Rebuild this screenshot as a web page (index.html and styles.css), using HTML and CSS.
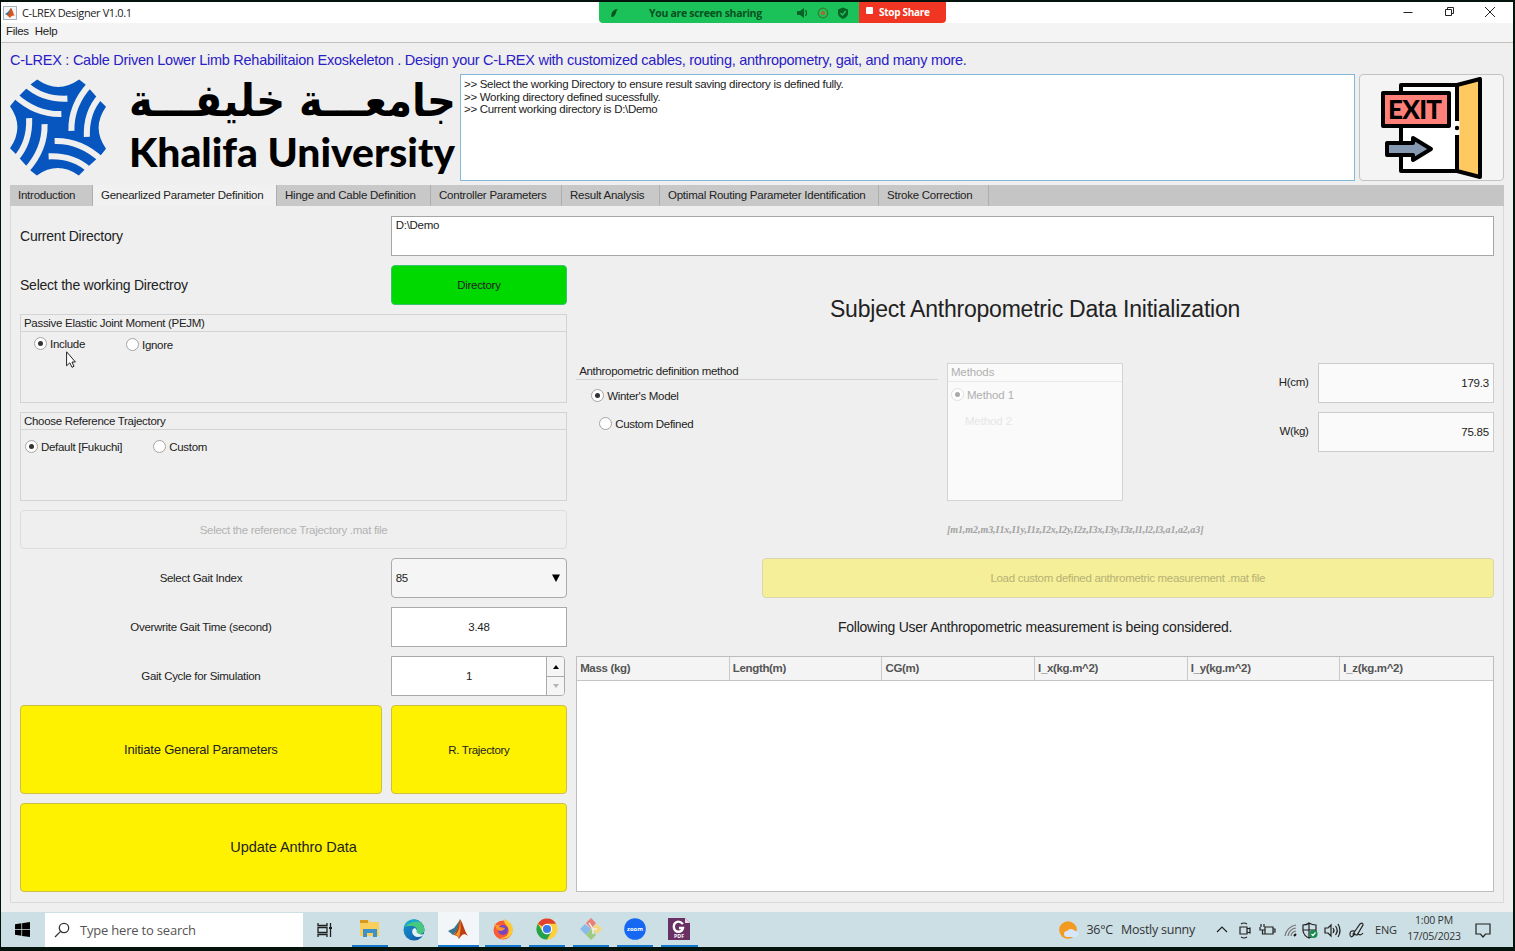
FILE: index.html
```html
<!DOCTYPE html>
<html lang="en">
<head>
<meta charset="utf-8">
<title>C-LREX Designer V1.0.1</title>
<link rel="stylesheet" href="styles.css">
</head>
<body>
<div class="screen">
  <header class="titlebar">
    <svg class="app-icon" viewBox="0 0 14 14"><rect x=".5" y=".5" width="13" height="13" fill="#f4f6f8" stroke="#a9b3bb"/><path d="M2 8l3-2 3-4 1 3-3 5z" fill="#356f9d"/><path d="M8 2c2 2 2 6 4 8-2-1-4 0-5 2L4 9c3-1 2-5 4-7z" fill="#d4571c"/></svg>
    <span class="app-title">C-LREX Designer V1.0.1</span>
    <div class="window-buttons">
      <svg viewBox="0 0 12 12"><path d="M1.500 6.500h9"/></svg>
      <svg viewBox="0 0 12 12"><path d="M2.500 3.500h6v6h-6zM4.500 3V1.500h6v6H9"/></svg>
      <svg viewBox="0 0 12 12"><path d="M1 1l10 10M11 1L1 11"/></svg>
    </div>
    <div class="share-bar">
      <div class="sharing">
        <svg class="share-leaf" viewBox="0 0 10 10"><path d="M1.500 9.500C1 4 4 .5 9 .5 7 2 7 4 6.500 5.500 5 7 5.500 9.500 1.500 9.500z" fill="#07571f"/></svg>
        <span>You are screen sharing</span>
        <svg class="share-icons" viewBox="0 0 54 14"><g fill="#086326"><path d="M1 5h3l4-3v10L4 9H1z"/><path d="M47 1.500l5 2v4c0 3-3 4.500-5 5.500-2-1-5-2.500-5-5.500v-4z"/></g><path d="M9.500 4q2 3 0 6" fill="none" stroke="#086326" stroke-width="1.300"/><circle cx="27" cy="7" r="4.800" fill="none" stroke="#397c2d" stroke-width="1.200"/><circle cx="27" cy="7" r="2.200" fill="#a66b35"/><path d="M44.500 7l2 2 3.300-4" fill="none" stroke="#22c75a" stroke-width="1.300"/></svg>
      </div>
      <div class="stop"><i></i><span>Stop Share</span></div>
    </div>
  </header>
  <nav class="menubar"><span>Files</span><span>Help</span></nav>

  <main class="app">
    <h1 class="tagline">C-LREX : Cable Driven Lower Limb Rehabilitaion Exoskeleton . Design your C-LREX with customized cables, routing, anthropometry, gait, and many more.</h1>
    <section class="banner">
      <div class="logo">
        <svg class="emblem" viewBox="31 26 286 288">
          <path fill="#0756bf" d="M112 27Q175 71 237 27L256 42 302 93 317 108Q273 171 317 233L302 252 251 298 236 313Q173 269 111 313L92 298 46 247 31 232Q75 169 31 107L46 88 92 42Z"/>
          <g fill="none" stroke="#efefef" stroke-width="18">
            <g id="gaps"><path d="M80 43Q128 87 202 84"/><path d="M46 75Q108 132 184 130"/></g>
            <use href="#gaps" transform="rotate(90 174 170)"/>
            <use href="#gaps" transform="rotate(180 174 170)"/>
            <use href="#gaps" transform="rotate(270 174 170)"/>
          </g>
        </svg>
        <svg class="wordmark" viewBox="0 0 328 106">
          <text class="ar" x="327" y="41" direction="rtl" textLength="327" lengthAdjust="spacingAndGlyphs">جامعـــة خليفـــة</text>
          <text class="en" x="0" y="92" textLength="326" lengthAdjust="spacingAndGlyphs">Khalifa University</text>
        </svg>
      </div>
      <div class="console"><p>&gt;&gt; Select the working Directory to ensure result saving directory is defined fully.</p><p>&gt;&gt; Working directory defined sucessfully.</p><p>&gt;&gt; Current working directory is D:\Demo</p></div>
      <div class="exit">
        <svg viewBox="0 0 102 102">
          <g stroke="#000" stroke-width="4" stroke-linejoin="round">
            <path d="M21 8H77V94H21z" fill="#fff"/>
            <path d="M77 8l23-6v98l-23-6z" fill="#ffc961"/>
            <path d="M3 16h66v33H3z" fill="#ff8078"/>
            <path d="M7 66h26v-5l18 11-18 11v-5H7z" fill="#8599b2"/>
          </g>
          <path d="M77 44v14" stroke="#fff" stroke-width="5"/><circle cx="77" cy="51" r="2.200"/>
          <text x="8" y="42" textLength="54" lengthAdjust="spacing">EXIT</text>
        </svg>
      </div>
    </section>

    <nav class="tabs">
      <span class="t1">Introduction</span><span class="t2 on">Genearlized Parameter Definition</span><span class="t3">Hinge and Cable Definition</span><span class="t4">Controller Parameters</span><span class="t5">Result Analysis</span><span class="t6">Optimal Routing Parameter Identification</span><span class="t7">Stroke Correction</span>
    </nav>
    <section class="panel">
      <div class="cell dir-label big">Current Directory</div>
      <div class="cell dir-value">D:\Demo</div>
      <div class="cell work-label big">Select the working Directroy</div>
      <div class="cell btn green">Directory</div>

      <fieldset class="cell group pejm"><div class="group-title">Passive Elastic Joint Moment (PEJM)</div>
        <div class="radios"><label class="radio checked"><i></i>Include</label><label class="radio"><i></i>Ignore</label></div></fieldset>
      <fieldset class="cell group traj"><div class="group-title">Choose Reference Trajectory</div>
        <div class="radios"><label class="radio checked"><i></i>Default [Fukuchi]</label><label class="radio"><i></i>Custom</label></div></fieldset>

      <div class="cell btn ghost">Select the reference Trajectory .mat file</div>
      <div class="cell label gait">Select Gait Index</div>
      <div class="cell select"><span>85</span><svg viewBox="0 0 8 8"><path d="M0 .5h8L4 8z"/></svg></div>
      <div class="cell label time">Overwrite Gait Time (second)</div>
      <div class="cell field time-value">3.48</div>
      <div class="cell label cycle">Gait Cycle for Simulation</div>
      <div class="cell spinner"><span>1</span><div class="arrows"><b><svg viewBox="0 0 6 4"><path d="M0 4h6L3 0z"/></svg></b><b class="off"><svg viewBox="0 0 6 4"><path d="M0 0h6L3 4z"/></svg></b></div></div>
      <div class="cell btn yellow init">Initiate General Parameters</div>
      <div class="cell btn yellow rtraj">R. Trajectory</div>
      <div class="cell btn yellow update">Update Anthro Data</div>

      <h2 class="cell subject">Subject Anthropometric Data Initialization</h2>
      <div class="cell anthro"><div class="group-title">Anthropometric definition method</div>
        <label class="radio checked"><i></i>Winter's Model</label><label class="radio second"><i></i>Custom Defined</label></div>
      <div class="cell methods"><div class="group-title">Methods</div>
        <label class="radio checked"><i></i>Method 1</label><div class="method2">Method 2</div></div>
      <div class="cell unit h-label">H(cm)</div><div class="cell num h-value">179.3</div>
      <div class="cell unit w-label">W(kg)</div><div class="cell num w-value">75.85</div>
      <div class="cell vector"><span>[m1,m2,m3,I1x,I1y,I1z,I2x,I2y,I2z,I3x,I3y,I3z,l1,l2,l3,a1,a2,a3]</span></div>
      <div class="cell btn load">Load custom defined anthrometric measurement .mat file</div>
      <div class="cell following big">Following User Anthropometric measurement is being considered.</div>
      <div class="cell table"><div class="thead"><span>Mass (kg)</span><span>Length(m)</span><span>CG(m)</span><span>I_x(kg.m^2)</span><span>I_y(kg.m^2)</span><span>I_z(kg.m^2)</span></div></div>
    </section>
  </main>

  <footer class="taskbar">
    <div class="start"><svg viewBox="0 0 16 16"><path d="M0 2.300l6.800-1v6.200H0zM7.600 1.200L16 0v7.500H7.600zM0 8.300h6.800v6.300L0 13.700zM7.600 8.300H16V16l-8.400-1.200z"/></svg></div>
    <div class="search"><svg viewBox="0 0 16 16" fill="none" stroke="#333" stroke-width="1.300"><circle cx="10" cy="6" r="4.700"/><path d="M6.600 9.400L1 15"/></svg><span>Type here to search</span></div>
    <div class="taskview"><svg viewBox="0 0 16 14" fill="none" stroke="#222" stroke-width="1.300"><path d="M1 0v2.500h9V0M1 14v-2.500h9V14M1 4.500h9v5H1zM13.500 0v14"/><path d="M12 4h3v2h-3z" fill="#222" stroke="none"/></svg></div>
    <div class="apps">
      <div class="app-slot run"><svg viewBox="0 0 22 22"><path d="M1 2h8l2 2h9v14H1z" fill="#f9cf5b"/><path d="M1 2h8v3H1z" fill="#d89a1d"/><path d="M4 19v-8h14v8h-4v-4H8v4z" fill="#3d91c9"/></svg></div>
      <div class="app-slot"><svg viewBox="0 0 22 22"><defs><linearGradient id="edge" x2="1" y2="1"><stop stop-color="#1590cf"/><stop offset=".5" stop-color="#1478bd"/><stop offset="1" stop-color="#0e519b"/></linearGradient></defs><circle cx="11" cy="11" r="10.500" fill="url(#edge)"/><path d="M1 8C3-2 21-2 21.500 11c0 5-8 5-8 2 2-3-1-6-5-6-4 0-6 0-7.500 1z" fill="#48c77e"/><path d="M1 9C2 0 14-2 17 3 13 2 5 3 1 9z" fill="#1aa7d0"/><path d="M12 9c-5 1-3 9 3 9 3 0 5-1 6-3-3 1-6 0-7.500-2 1-1 0-3-1.500-4z" fill="#e5f3f6"/></svg></div>
      <div class="app-slot run active"><svg viewBox="0 0 22 22"><path d="M1 13l6-3 6-8-3 11-4 4z" fill="#37778f"/><path d="M13 1c3 4 4 11 8 17-4-3-6-2-9 3-1-3-3-4-6-4 5-3 5-11 7-16z" fill="#bf3d16"/><path d="M13 1c0 7-1 13-5 16 2 0 3 1 4 3 2-7 2-14 1-19z" fill="#f09a2b"/></svg></div>
      <div class="app-slot run"><svg viewBox="0 0 22 22"><circle cx="11" cy="12" r="9.500" fill="#fa5a35"/><path d="M12 1c6 2 10 7 8.500 13-1 5-8 8-13 6 7 0 10-4 9-9-1-4-5-5-4.500-10z" fill="#ffc936"/><path d="M2 5l2 2h4l-3 5" fill="#ff9b2e"/><circle cx="11" cy="12" r="5" fill="#7546c4"/><path d="M5 10c3-2 5 0 8 0-1 3-3 2-4 3-2 0-4-1-4-3z" fill="#ff922e"/></svg></div>
      <div class="app-slot run"><svg viewBox="0 0 22 22"><circle cx="11" cy="11" r="10.500" fill="#ffcf3c"/><path d="M11 11L1.900 5.700A10.500 10.500 0 0 1 20.100 5.700H11z" fill="#e4402f"/><path d="M1.900 5.700A10.500 10.500 0 0 0 11 21.500l4.500-8-9 0z" fill="#25a24c"/><circle cx="11" cy="11" r="5.200" fill="#fff"/><circle cx="11" cy="11" r="4.100" fill="#3a7bea"/></svg></div>
      <div class="app-slot run"><svg viewBox="0 0 22 22"><path d="M11 0l5 5-5 6-5-6z" fill="#ec7f75"/><path d="M5 6l6 5-5 6-6-6z" fill="#8abbea"/><path d="M17 6l5 5-5 5-6-5z" fill="#f5d77d"/><path d="M11 11l5 6-5 5-5-5z" fill="#9ecb82"/><path d="M9 5l4 6v5M13 11l4 0" fill="none" stroke="#edf1ee" stroke-width="1.500"/></svg></div>
      <div class="app-slot run"><svg viewBox="0 0 22 22"><circle cx="11" cy="11" r="10.800" fill="#1668f2"/><text class="zoom-text" x="3" y="13" textLength="16" lengthAdjust="spacingAndGlyphs">zoom</text></svg></div>
      <div class="app-slot run"><svg viewBox="0 0 22 22"><path d="M0 0h17l5 5v17H0z" fill="#693064"/><path d="M17 0v5h5" fill="#e9d9e8"/><path d="M15 6C10 1 5 5 6 10c1 5 8 5 9 0h-4" fill="none" stroke="#fff" stroke-width="2.400"/><text class="pdf-text" x="6" y="20" textLength="10" lengthAdjust="spacingAndGlyphs">PDF</text></svg></div>
    </div>
    <div class="weather"><svg viewBox="0 0 20 18"><circle cx="9" cy="9" r="8.800" fill="#f39a20"/><path d="M8 16a3 3 0 0 1 0-6 5 5 0 0 1 8 0 3 3 0 0 1 1 6z" fill="#d7e6fa"/></svg><span class="temp">36°C</span><span class="sunny">Mostly sunny</span></div>
    <svg class="tray" viewBox="0 0 150 20" fill="none" stroke="#222" stroke-width="1.200">
      <path d="M2 12l5-5 5 5"/>
      <path d="M25 7h7v7h-7zM32 9l3-1v5l-3-1M26 4q3-2 6 0M26 17q3 2 6 0"/>
      <path d="M50 7h8v7h-8zM58 9h2v3h-2M45 7v3h5v-3M46 4v3M49 4v3M47.500 10v4h2"/>
      <g stroke="#777"><path d="M70 16A13 13 0 0 1 81 5M73 16a9 9 0 0 1 8-8M76 16a6 6 0 0 1 5-5"/><path d="M79 16l2-2" stroke="#111" stroke-width="2"/></g>
      <path d="M88 5q4 0 6-2 3 2 7 2v6q-1 5-7 7-5-2-6-7zM94 3v15M88 10h13"/><circle cx="98.500" cy="14" r="4" fill="#178b50" stroke="none"/><path d="M96.500 14l1.500 1.500 2.500-3" stroke="#fff"/>
      <path d="M110 8h3l3-3v11l-3-3h-3zM118 8q2 2.500 0 5M120.500 6q3.500 4.500 0 9M123 4q4 6.500 0 13"/>
      <path d="M138 14l7-10q3-2 3 1l-6 10zM140 11q-5-1-5 3 0 5 4 1l1-2M143 14q3 2 5-1" />
    </svg>
    <span class="lang">ENG</span>
    <div class="clock"><span>1:00 PM</span><span>17/05/2023</span></div>
    <svg class="note" viewBox="0 0 16 16" fill="none" stroke="#222" stroke-width="1.200"><path d="M1 2h14v10h-4.500L8 15l-2.500-3H1z"/></svg>
  </footer>
</div>
<svg class="cursor" viewBox="0 0 10 17"><path d="M.6.8v14l3.200-3 2.200 4.500 2-1-2-4.300h3.400z" fill="#fff" stroke="#222"/></svg>
</body>
</html>
```
FILE: styles.css
```css
* { box-sizing: border-box; }
body { margin: 0; background: #04140d; font: 11.500px "Liberation Sans", Arial, sans-serif; letter-spacing: -0.3px; color: #222; overflow: hidden; white-space: nowrap; }
p, h1, h2 { margin: 0; font-weight: normal; }
svg { display: block; flex: none; }
svg text { letter-spacing: 0; }
.screen { height: 951px; padding: 2px 2px 4px 1px; display: flex; flex-direction: column; }

.titlebar { position: relative; flex: none; height: 21px; background: #fff; display: flex; align-items: center; padding-left: 2px; font-family: "Open Sans", sans-serif; font-size: 11px; }
.app-icon { width: 14px; height: 14px; }
.app-title { margin-left: 5px; margin-top: -1px; letter-spacing: -0.38px; }
.window-buttons { margin-left: auto; display: flex; gap: 29px; padding-right: 17px; margin-top: -2px; }
.window-buttons svg { width: 12px; height: 12px; fill: none; stroke: #222; }
.share-bar { position: absolute; left: 598px; top: 0; width: 347px; height: 21px; display: flex; border-radius: 0 0 4px 4px; overflow: hidden; font-weight: 700; }
.sharing { width: 260px; background: #1bc259; color: #08501f; display: flex; align-items: center; padding-left: 11px; font-size: 10.500px; }
.share-leaf { width: 9px; height: 10px; margin-right: 30px; }
.share-icons { width: 54px; height: 14px; margin-left: auto; margin-right: 9px; }
.stop { flex: 1; background: #f03522; color: #fff; display: flex; align-items: center; gap: 6px; padding-left: 7px; font-size: 10px; }
.stop span { margin-top: -2px; }
.stop i { width: 7px; height: 7px; background: #fff; border-radius: 1px; margin-top: -4px; }
.menubar { flex: none; height: 20px; background: #f4f4f4; border-bottom: 1.500px solid #c3c0c0; display: flex; gap: 6px; padding: 2px 0 0 5px; }

.app { flex: none; height: 869px; background: #efefef; padding: 8px 9px 0 9px; display: flex; flex-direction: column; }
.tagline { height: 23px; line-height: 19px; font-size: 14.500px; letter-spacing: -0.265px; color: #2a20c6; flex: none; }
.banner { height: 107px; flex: none; display: flex; }
.logo { width: 450px; display: flex; align-items: center; }
.emblem { width: 96px; height: 97px; }
.wordmark { width: 328px; height: 106px; margin-left: 23px; overflow: visible; }
.ar { font: bold 45px "DejaVu Sans", sans-serif; }
.en { font: 900 39px Lato, sans-serif; }
.console { width: 895px; background: #fff; border: 1.500px solid #82b7d8; padding: 3px 3px; line-height: 12.500px; }
.exit { margin-left: 4px; width: 145px; border: 1px solid #c3c3c3; border-radius: 4px; background: #f4f4f4; display: flex; align-items: center; padding-left: 20px; }
.exit svg { width: 102px; height: 102px; }
.exit text { font: 900 26px Lato, sans-serif; }

.tabs { flex: none; height: 21px; margin-top: 4px; background: #c5c5c5; display: flex; line-height: 21px; letter-spacing: -0.24px; }
.tabs span { padding-left: 8px; border-right: 1px solid #aeaeae; background: #c8c8c8; }
.tabs .on { background: #f1f1f1; }
.t1 { width: 83px; } .t2 { width: 184px; } .t3 { width: 154px; } .t4 { width: 131px; } .t5 { width: 98px; } .t6 { width: 219px; } .t7 { width: 110px; }

.panel { flex: none; height: 697px; border: 1px solid #d9d9d9; border-top: 0; padding: 10px 9px 10px 9px; display: grid; grid-template-columns: repeat(8, 1fr); grid-template-rows: repeat(14, 1fr); gap: 9px; }
.cell { min-width: 0; min-height: 0; margin: 0; display: flex; align-items: center; }
.big { font-size: 14px; letter-spacing: -0.23px; }
.dir-label { grid-area: 1 / 1 / 2 / 3; }
.dir-value { grid-area: 1 / 3 / 2 / 9; background: #fff; border: 1px solid #a6a6a6; align-items: flex-start; padding: 2px 4px; }
.work-label { grid-area: 2 / 1 / 3 / 3; }
.btn { justify-content: center; border-radius: 4px; border: 1px solid #bbb; }
.green { grid-area: 2 / 3; background: #00d900; border-color: #39c36c; }
.group { border: 1px solid #d3d3d3; padding: 0; display: block; }
.group-title { height: 17px; line-height: 16px; padding-left: 3px; border-bottom: 1px solid #d3d3d3; }
.radios { display: flex; }
.radio { display: flex; align-items: center; gap: 3px; height: 14px; }
.radio i { width: 13px; height: 13px; border: 1px solid #a5a5a5; border-radius: 50%; background: #fff; display: grid; place-items: center; }
.checked i::after { content: ""; width: 5px; height: 5px; border-radius: 50%; background: #333; }
.pejm { grid-area: 3 / 1 / 5 / 4; }
.pejm .radios { padding: 5px 0 0 13px; gap: 41px; }
.pejm .radio + .radio { padding-top: 2px; }
.traj { grid-area: 5 / 1 / 7 / 4; }
.traj .radios { padding: 10px 0 0 4px; gap: 31px; }
.ghost { grid-area: 7 / 1 / 8 / 4; color: #b3b3b3; border-color: #dcdcdc; }
.label { justify-content: center; }
.gait { grid-area: 8 / 1 / 9 / 3; }
.select { grid-area: 8 / 3; background: #f5f5f5; border: 1px solid #aaa; border-radius: 4px; padding: 0 6px 0 4px; justify-content: space-between; }
.select svg { width: 8px; height: 8px; }
.time { grid-area: 9 / 1 / 10 / 3; }
.field { background: #fff; border: 1px solid #aaa; justify-content: center; }
.time-value { grid-area: 9 / 3; }
.cycle { grid-area: 10 / 1 / 11 / 3; }
.spinner { grid-area: 10 / 3; margin-right: 2px; border: 1px solid #aaa; border-radius: 0 4px 4px 0; background: #fff; align-items: stretch; overflow: hidden; }
.spinner span { flex: 1; display: grid; place-items: center; }
.arrows { width: 18px; border-left: 1px solid #aaa; background: #f5f5f5; display: flex; flex-direction: column; }
.arrows b { flex: 1; display: grid; place-items: center; }
.arrows svg { width: 6px; height: 4px; }
.arrows .off { border-top: 1px solid #aaa; }
.off path { fill: #b5b5b5; }
.yellow { background: #fff200; border-color: #cbbf45; }
.init { grid-area: 11 / 1 / 13 / 3; font-size: 13px; letter-spacing: -0.2px; }
.rtraj { grid-area: 11 / 3 / 13 / 4; }
.update { grid-area: 13 / 1 / 15 / 4; font-size: 14.500px; letter-spacing: -0.05px; padding-bottom: 2px; }

.subject { grid-area: 2 / 4 / 4 / 9; justify-content: center; font-size: 23px; letter-spacing: -0.22px; }
.anthro { grid-area: 4 / 4 / 7 / 6; display: block; }
.anthro .radio { margin: 9px 0 0 15px; }
.anthro .second { margin: 14px 0 0 23px; }
.methods { grid-area: 4 / 6 / 7 / 7; display: block; background: #fafafa; border: 1px solid #d4d4d4; color: #b0b0b0; letter-spacing: -0.1px; }
.methods .group-title { height: 18px; line-height: 17px; border-color: #e9e9e9; }
.methods .radio { margin: 6px 0 0 3px; }
.methods i { border-color: #e0e0e0; }
.methods i::after { background: #aaa; }
.method2 { margin: 13px 0 0 17px; color: #e6e6e6; }
.unit { justify-content: flex-end; padding-bottom: 2px; }
.h-label { grid-area: 4 / 7; } .w-label { grid-area: 5 / 7; }
.num { background: #fafafa; border: 1px solid #ccc; justify-content: flex-end; padding-right: 4px; letter-spacing: -0.2px; }
.h-value { grid-area: 4 / 8; } .w-value { grid-area: 5 / 8; }
.vector { grid-area: 7 / 6 / 8 / 9; color: #a2a2a2; font: italic bold 10px "Liberation Serif", serif; letter-spacing: -0.05px; }
.load { grid-area: 8 / 5 / 9 / 9; background: #f4ef98; border-color: #dad7ad; color: #b7b276; }
.following { grid-area: 9 / 4 / 10 / 9; justify-content: center; }
.table { grid-area: 10 / 4 / 15 / 9; background: #fff; border: 1px solid #bebebe; display: block; }
.thead { height: 24px; border-bottom: 1px solid #c4c4c4; background: #f4f4f4; display: grid; grid-template-columns: repeat(6, 1fr); line-height: 23px; font-weight: 700; letter-spacing: -0.33px; color: #555; }
.thead span { padding-left: 3px; border-right: 1px solid #c9c9c9; }
.thead span:last-child { border: 0; }

.taskbar { flex: 1; background: #cbdfe5; display: flex; align-items: center; font-family: "Open Sans", sans-serif; letter-spacing: -0.2px; color: #333; }
.start { width: 44px; padding-left: 14px; }
.start svg { width: 15px; height: 15px; }
.search { width: 258px; height: 34px; background: #fff; display: flex; align-items: center; padding-left: 9px; gap: 10px; font-size: 13px; color: #555; }
.search svg { width: 16px; height: 16px; }
.taskview { margin-left: 14px; width: 30px; }
.taskview svg { width: 16px; height: 14px; }
.apps { align-self: stretch; display: flex; gap: 8px; margin-left: 5px; }
.app-slot { width: 36.200px; display: grid; place-items: center; }
.app-slot svg { width: 22px; height: 22px; }
.run { border-bottom: 2px solid #1478cf; }
.active { width: 40.200px; margin: 0 -2px; background: #f2f6f8; }
.zoom-text { font: 700 6px "Open Sans", sans-serif; fill: #fff; }
.pdf-text { font: 700 5px "Open Sans", sans-serif; fill: #fff; }
.weather { margin-left: auto; display: flex; align-items: center; font-size: 12.500px; letter-spacing: -0.25px; }
.weather svg { width: 20px; height: 18px; }
.temp { margin-left: 7px; } .sunny { margin-left: 8px; }
.tray { width: 150px; height: 20px; margin-left: 20px; }
.lang { margin-left: 10px; font-size: 11px; width: 22px; }
.clock { width: 64px; margin-left: 5px; display: flex; flex-direction: column; align-items: center; font-size: 10.500px; line-height: 16px; padding-bottom: 3px; }
.note { width: 16px; height: 16px; margin: 0 22px 0 9px; }
.cursor { position: absolute; left: 66px; top: 351px; width: 10px; height: 17px; }
```
